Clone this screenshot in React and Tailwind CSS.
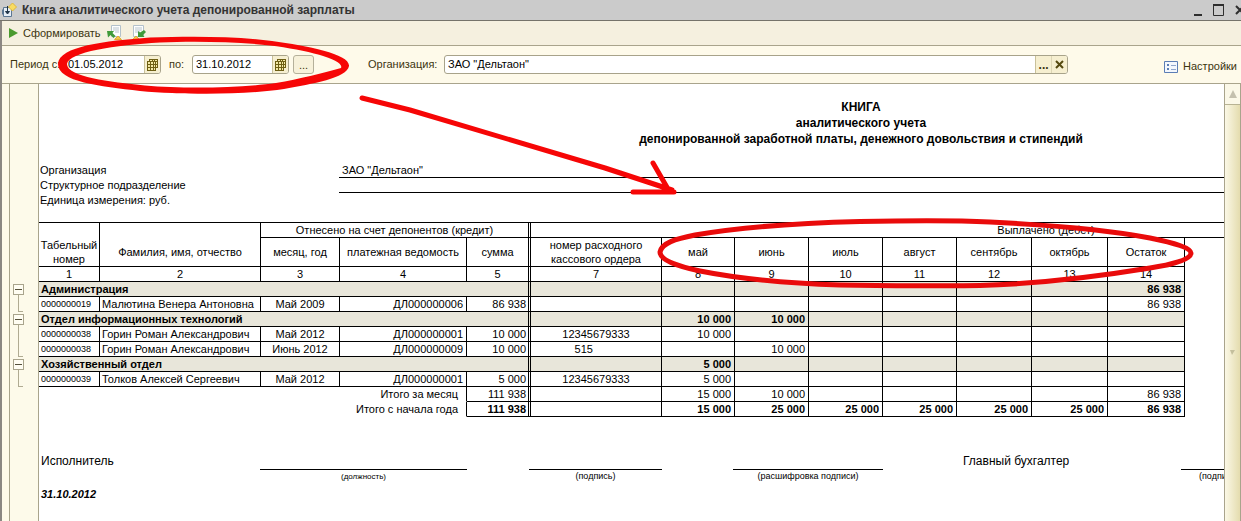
import React from "react";

const COLS = [61, 161, 79, 127, 64, 131, 73, 74, 74, 74, 75, 76, 77, 377];
const LINE = "border-r border-b border-black";
const DOUBLE = "border-b border-black border-r-[3px] [border-right-style:double]";

const groups = [
  {
    name: "Администрация",
    sums: ["", "", "", "", "", "", "", "86 938"],
    rows: [
      ["0000000019", "Малютина Венера Антоновна", "Май 2009", "ДЛ000000006", "86 938", ["", "", "", "", "", "", "", "86 938"]],
    ],
  },
  {
    name: "Отдел информационных технологий",
    sums: ["", "10 000", "10 000", "", "", "", "", ""],
    rows: [
      ["0000000038", "Горин Роман Александрович", "Май 2012", "ДЛ000000001", "10 000", ["12345679333", "10 000", "", "", "", "", "", ""]],
      ["0000000038", "Горин Роман Александрович", "Июнь 2012", "ДЛ000000009", "10 000", ["515\u00a0\u00a0\u00a0\u00a0\u00a0\u00a0\u00a0\u00a0", "", "10 000", "", "", "", "", ""]],
    ],
  },
  {
    name: "Хозяйственный отдел",
    sums: ["", "5 000", "", "", "", "", "", ""],
    rows: [
      ["0000000039", "Толков Алексей Сергеевич", "Май 2012", "ДЛ000000001", "5 000", ["12345679333", "5 000", "", "", "", "", "", ""]],
    ],
  },
];

const totals = [
  { label: "Итого за месяц", sum: "111 938", cells: ["", "15 000", "10 000", "", "", "", "", "86 938"], bold: false },
  { label: "Итого с начала года", sum: "111 938", cells: ["", "15 000", "25 000", "25 000", "25 000", "25 000", "25 000", "86 938"], bold: true },
];

const months = ["май", "июнь", "июль", "август", "сентябрь", "октябрь", "Остаток"];

function WindowIcon() {
  return (
    <svg width="17" height="18" viewBox="0 0 17 18" className="shrink-0" aria-hidden="true">
      <path d="M1.500 6.500h8v9h-8z" fill="#e6eef6" stroke="#5c7793" />
      <path d="M0.500 8.500v5" fill="none" stroke="#5c7793" />
      <path d="M5.500 5v7M3.500 10.500l2 2.500 2-2.500z" fill="#1f3448" stroke="#1f3448" />
      <path d="M10.500 2.500l4-1.500 0 0z" fill="none" />
      <path d="M10.500 2l4 4-4 4-4-4z" fill="#f8dc62" stroke="#dfb63c" />
    </svg>
  );
}

function SheetIcon({ restore }) {
  return (
    <svg width="16" height="16" viewBox="0 0 16 16" aria-hidden="true">
      <path d={restore ? "M1.500 0.500h10v11h-10z" : "M4.500 0.500h9v11h-9z"} fill="#fdfefe" stroke="#b3c1cb" />
      <path d={restore ? "M3 3h7M3 5h7M3 7h5" : "M6 3h6M6 5h6M8 7h4"} stroke="#b9c5ce" />
      {restore ? (
        <path d="M14 7l-3 3 1.500 2H6V6l2 1.500L12 5z" fill="#3f9a3a" />
      ) : (
        <path d="M0 6h7l-1.500 2L8.500 11l-2 2L3.500 10l-2.500 2.500z" fill="#3f9a3a" />
      )}
      {restore ? (
        <path d="M0.500 14.500L4 11l3.500 3.500z" fill="#f3c74a" stroke="#e0ac38" />
      ) : (
        <path d="M7.500 14.500L11 11l3.500 3.500z" fill="#f3c74a" stroke="#e0ac38" />
      )}
    </svg>
  );
}

function CalendarIcon() {
  return (
    <svg width="11" height="12" viewBox="0 0 11 12" aria-hidden="true">
      <path d="M2 0h9v9H9v3H0V2h2z" fill="#6e5f14" />
      <path d="M3 1h2v1H3zM6 1h1v1H6zM8 1h2v1H8zM1 3h2v2H1zM4 3h2v2H4zM7 3h1v2H7zM9 3h1v2H9zM1 6h2v2H1zM4 6h2v2H4zM7 6h1v2H7zM9 6h1v2H9zM1 9h2v2H1zM4 9h2v2H4zM7 9h1v2H7z" fill="#f3e9a6" />
    </svg>
  );
}

function DateField({ id, value }) {
  return (
    <div className="flex h-[19px] w-[97px] overflow-hidden rounded-[3px] border border-[#a8a38a] bg-white">
      <input id={id} defaultValue={value} className="w-0 flex-1 pl-[3px] text-black outline-none" />
      <button aria-label="Выбрать дату" className="flex w-4 items-center justify-center border-l border-[#c9c19a] bg-[#f6efd0]">
        <CalendarIcon />
      </button>
    </div>
  );
}

function TitleBar() {
  return (
    <header className="flex h-[21px] items-center overflow-hidden border-b border-[#75736a] bg-[#cbcbcb] pl-[2px]">
      <WindowIcon />
      <h1 className="ml-[3px] flex-1 pt-px text-[12px] font-bold whitespace-nowrap text-[#333]">
        Книга аналитического учета депонированной зарплаты
      </h1>
      <div className="-mr-1 flex items-center gap-[11px] text-[#2e2e2e]">
        <button aria-label="Свернуть">
          <svg width="8" height="12" viewBox="0 0 8 12"><path d="M0 10h8v2H0z" fill="currentColor" /></svg>
        </button>
        <button aria-label="Развернуть">
          <svg width="11" height="12" viewBox="0 0 11 12"><path d="M0.500 1h10v10.500h-10z" fill="none" stroke="currentColor" /><path d="M0 0h11v2H0z" fill="currentColor" /></svg>
        </button>
        <button aria-label="Закрыть">
          <svg width="10" height="10" viewBox="0 0 10 10"><path d="M1 1l8 8M9 1l-8 8" stroke="currentColor" strokeWidth="2" /></svg>
        </button>
      </div>
    </header>
  );
}

function Toolbar() {
  return (
    <div className="flex h-[25px] items-center border-b border-[#a9a48c] bg-[#f5f0df] pl-[7px]">
      <button className="flex items-center gap-[5px]">
        <svg width="9" height="10" viewBox="0 0 9 10" aria-hidden="true"><path d="M0 0l9 5-9 5z" fill="#4a9a2e" /></svg>
        <span>Сформировать</span>
      </button>
      <button aria-label="Сохранить настройки" className="ml-[6px]"><SheetIcon /></button>
      <button aria-label="Восстановить настройки" className="ml-[9px]"><SheetIcon restore /></button>
    </div>
  );
}

function Parameters() {
  return (
    <div className="flex h-[38px] items-center border-b border-[#a9a48c] pr-1 pl-2">
      <label htmlFor="from" className="w-[54px] whitespace-nowrap">Период с:</label>
      <DateField id="from" value="01.05.2012" />
      <label htmlFor="to" className="mx-2 w-[15px]">по:</label>
      <DateField id="to" value="31.10.2012" />
      <button aria-label="Выбрать период" className="ml-1 h-[19px] w-[21px] rounded-[3px] border border-[#b5b09a] bg-[#f7f1da] leading-3">...</button>
      <label htmlFor="org" className="ml-[54px] w-[76px] whitespace-nowrap">Организация:</label>
      <div className="flex h-[19px] flex-1 overflow-hidden rounded-[3px] border border-[#a8a38a] bg-white">
        <input id="org" defaultValue={'ЗАО "Дельтаон"'} className="w-0 flex-1 pl-[3px] text-black outline-none" />
        <button aria-label="Выбрать организацию" className="w-4 border-l border-[#c9c19a] bg-[#f6efd0] text-[12px] leading-3 font-bold">...</button>
        <button aria-label="Очистить" className="flex w-4 items-center justify-center border-l border-[#ddd6b4] bg-[#f6efd0]">
          <svg width="9" height="9" viewBox="0 0 9 9"><path d="M1 1l7 7M8 1l-7 7" stroke="#55490f" strokeWidth="2" /></svg>
        </button>
      </div>
      <button className="ml-24 flex items-center gap-[5px] pt-1">
        <svg width="14" height="12" viewBox="0 0 14 12" aria-hidden="true">
          <path d="M0.500 0.500h13v11h-13z" fill="#f3f7fd" stroke="#5b7db5" />
          <path d="M3 3h2v2H3zM3 7h2v2H3z" fill="#5b7db5" />
          <path d="M7 4.500h5M7 8.500h5" stroke="#8fa6cc" />
        </svg>
        <span>Настройки</span>
      </button>
    </div>
  );
}

function Gutter() {
  return (
    <div className="flex w-[30px] shrink-0 flex-col border-x border-[#a9a48c] bg-[#fdfaea] pt-[198px] pl-[3px]">
      {groups.map((g) => (
        <div key={g.name} className="flex flex-col pt-[2px]">
          <button aria-label={"Свернуть: " + g.name} className="flex h-[11px] w-[11px] items-center justify-center border border-[#a9a48c] bg-[#fffdf2]">
            <span className="h-px w-[7px] bg-[#55503a]" />
          </button>
          <div
            className="ml-[5px] w-[5px] border-b border-l border-[#b0ab92]"
            style={{ height: g.rows.length * 15 + 2 }}
          />
        </div>
      ))}
    </div>
  );
}

function PayoutCells({ values, bold }) {
  return values.map((v, i) => (
    <td
      key={i}
      className={`${LINE} ${i === 0 ? "text-center" : "pr-[3px] text-right"} ${bold ? "font-bold" : ""}`}
    >
      {v}
    </td>
  ));
}

function Ledger() {
  return (
    <table className="w-[1523px] table-fixed border-separate border-spacing-0 text-[11px] leading-[14px] whitespace-nowrap">
      <colgroup>
        {COLS.map((w, i) => (
          <col key={i} style={{ width: w }} />
        ))}
      </colgroup>
      <thead className="[&_th]:font-normal">
        <tr className="h-4">
          <th rowSpan={2} className={`${LINE} border-t align-bottom`}>Табельный<br />номер</th>
          <th rowSpan={2} className={`${LINE} border-t pb-[7px] align-bottom`}>Фамилия, имя, отчество</th>
          <th colSpan={3} className={`${DOUBLE} border-t`}>Отнесено на счет депонентов (кредит)</th>
          <th colSpan={9} className={`${LINE} border-t`}>Выплачено (дебет)</th>
        </tr>
        <tr className="h-[29px]">
          <th className={LINE}>месяц, год</th>
          <th className={LINE}>платежная ведомость</th>
          <th className={DOUBLE}>сумма</th>
          <th className={LINE}>номер расходного<br />кассового ордера</th>
          {months.map((m) => (
            <th key={m} className={LINE}>{m}</th>
          ))}
          <td />
        </tr>
        <tr className="h-[15px]">
          {[1, 2, 3, 4, 5, 7, 8, 9, 10, 11, 12, 13, 14].map((n) => (
            <th key={n} className={n === 5 ? DOUBLE : LINE}>{n}</th>
          ))}
          <td />
        </tr>
      </thead>
      {groups.map((g) => (
        <tbody key={g.name}>
          <tr className="h-[15px] [&>:not(:last-child)]:bg-[#e8e6da]">
            <th colSpan={5} className={`${DOUBLE} pl-[2px] text-left font-bold`}>{g.name}</th>
            <PayoutCells values={g.sums} bold />
            <td />
          </tr>
          {g.rows.map(([id, name, month, sheet, sum, payouts], i) => (
            <tr key={i} className="h-[15px]">
              <td className={`${LINE} pl-[2px] text-[9px]`}>{id}</td>
              <td className={`${LINE} pl-[2px]`}>{name}</td>
              <td className={`${LINE} text-center`}>{month}</td>
              <td className={`${LINE} pr-[3px] text-right`}>{sheet}</td>
              <td className={`${DOUBLE} pr-[2px] text-right`}>{sum}</td>
              <PayoutCells values={payouts} />
              <td />
            </tr>
          ))}
        </tbody>
      ))}
      <tfoot>
        {totals.map((t) => (
          <tr key={t.label} className="h-[15px]">
            <td colSpan={4} className="border-r border-b border-r-black border-b-transparent pr-2 text-right">{t.label}</td>
            <td className={`${DOUBLE} pr-[2px] text-right ${t.bold ? "font-bold" : ""}`}>{t.sum}</td>
            <PayoutCells values={t.cells} bold={t.bold} />
            <td />
          </tr>
        ))}
      </tfoot>
    </table>
  );
}

function Signature({ caption, className }) {
  return (
    <div className={`shrink-0 pt-4 text-center leading-[13px] ${className}`}>
      <div className="border-t border-black">{caption}</div>
    </div>
  );
}

function Report() {
  return (
    <article className="min-w-0 flex-1 overflow-hidden bg-white text-black">
      <h2 className="w-[1644px] pt-[15px] text-center text-[12px] leading-4 font-bold">
        КНИГА<br />аналитического учета<br />депонированной заработной платы, денежного довольствия и стипендий
      </h2>
      <dl className="mt-4 mb-[14px] grid w-[1523px] grid-cols-[300px_1fr] text-[11px] leading-[14px] [&>*]:h-[15px] [&>dt]:pl-px">
        <dt>Организация</dt>
        <dd className="border-b border-black pl-[3px]">ЗАО "Дельтаон"</dd>
        <dt>Структурное подразделение</dt>
        <dd className="border-b border-black" />
        <dt>Единица измерения: руб.</dt>
        <dd />
      </dl>
      <Ledger />
      <div className="mt-9 flex w-[1523px] text-[12px] leading-[17px]">
        <span className="w-[221px] shrink-0 pl-[2px]">Исполнитель</span>
        <Signature caption="(должность)" className="w-[207px] text-[8px]" />
        <Signature caption="(подпись)" className="ml-[62px] w-[133px] text-[9px]" />
        <Signature caption="(расшифровка подписи)" className="ml-[71px] w-[150px] text-[9px]" />
        <span className="ml-20 w-[218px] shrink-0">Главный бухгалтер</span>
        <Signature caption="(подпись)" className="w-[76px] text-[9px]" />
      </div>
      <p className="mt-1 pl-[2px] text-[11px] leading-[15px] font-bold italic">31.10.2012</p>
    </article>
  );
}

function ScrollBar() {
  return (
    <div className="flex w-[17px] shrink-0 flex-col items-center border-r border-l border-[#a9a48c] bg-linear-to-r from-[#fbf8e6] to-[#e4dcae]">
      <button aria-label="Прокрутить вверх" className="flex h-[21px] w-full items-center justify-center border-b border-[#b8b394] bg-[#fbf8e8]">
        <svg width="8" height="8" viewBox="0 0 8 8"><path d="M4 0l4 8H0z" fill="#c4c0ae" /></svg>
      </button>
      <svg width="5" height="5" viewBox="0 0 5 5" className="mt-[245px]" aria-hidden="true"><path d="M0 0h5L2 5z" fill="#c4bf9d" /></svg>
    </div>
  );
}

function Marks() {
  return (
    <svg
      width="1241"
      height="300"
      viewBox="0 0 1241 300"
      className="pointer-events-none absolute top-0 left-0"
      fill="none"
      stroke="#f60606"
      strokeLinecap="round"
      strokeLinejoin="round"
      aria-hidden="true"
    >
      <path
        d="M58 64C59 46 105 41 150 37.500C190 36 235 36 272 41C308 46 350 54 349 66C347 78 312 84 284 89C245 95 185 95 140 91C100 86 58 82 58 64ZM67 64C67 77 110 82 145 85.500C185 89 240 88 276 83C300 79 322 73 341 68C345 60 308 50 270 45.500C235 41.500 192 41 160 42.500C115 45 69 52 67 64Z"
        fill="#f60606"
        fillRule="evenodd"
        stroke="none"
      />
      <path d="M362 98L410 110L605 168L672 190M653 163L668 189M633 192H674" strokeWidth="5" />
      <path d="M660 252C662 243 675 239 695 235C735 228 800 223 860 221.500C910 220.500 960 220.500 990 222C1050 225 1110 230 1150 238C1175 243 1191 248 1191 253C1191 260 1170 265 1150 268C1095 277 1030 284 980 285.500C930 286 880 286 840 285C780 283 730 277 700 271C677 266 660 260 660 252Z" strokeWidth="5" stroke="#e90b0b" />
    </svg>
  );
}

export default function App() {
  return (
    <div className="relative flex min-h-screen flex-col overflow-hidden bg-[#fefaea] font-['Liberation_Sans',Arial,sans-serif] text-[11px] leading-[15px] text-[#3c3510]">
      <TitleBar />
      <div className="flex flex-1 flex-col border-l-2 border-[#8b8783]">
        <Toolbar />
        <Parameters />
        <main className="flex flex-1 pl-[7px]">
          <Gutter />
          <Report />
          <ScrollBar />
        </main>
      </div>
      <Marks />
    </div>
  );
}
